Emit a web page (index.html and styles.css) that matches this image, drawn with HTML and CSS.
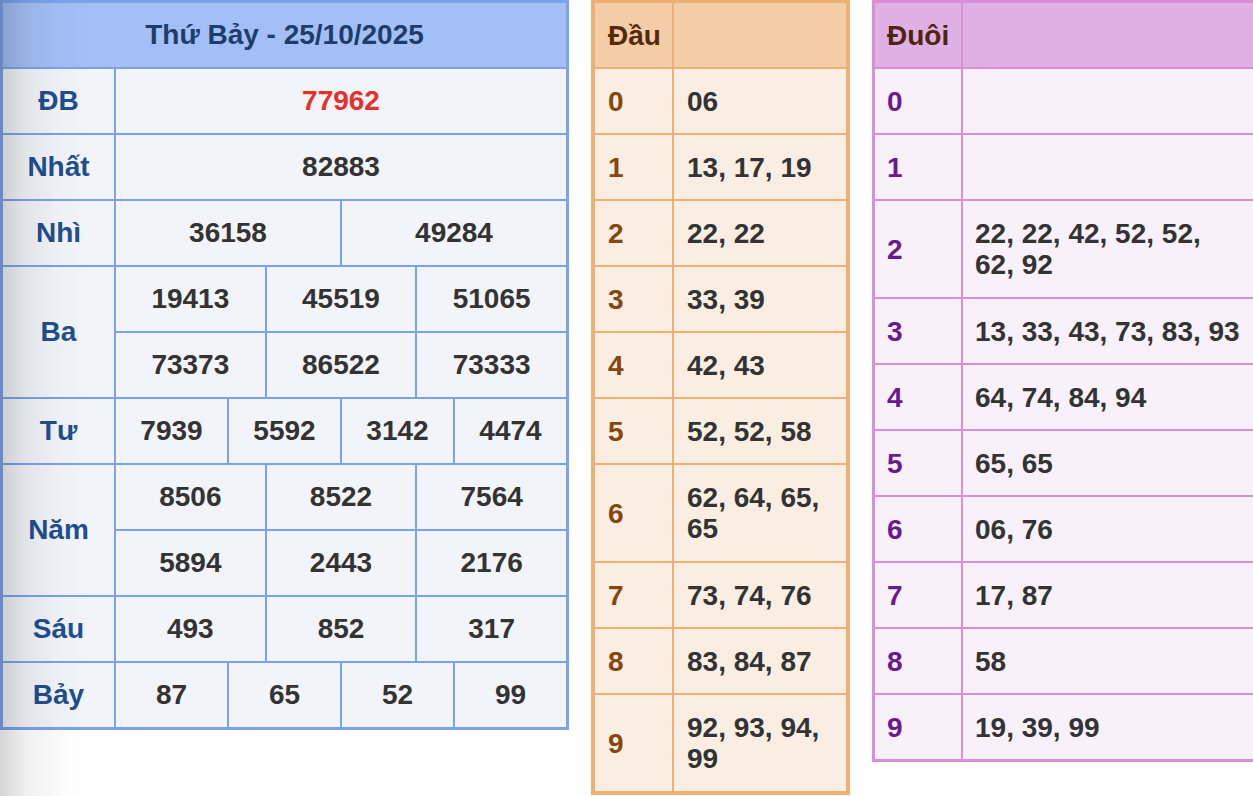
FILE: index.html
```html
<!DOCTYPE html>
<html lang="vi">
<head>
<meta charset="utf-8">
<title>Kết quả xổ số</title>
<link rel="stylesheet" href="styles.css">
</head>
<body>
<div class="page">
  <div class="kq">
    <div class="kq-head c-all">Thứ Bảy - 25/10/2025</div>

    <div class="lbl">ĐB</div>
    <div class="num red c-all">77962</div>

    <div class="lbl">Nhất</div>
    <div class="num c-all">82883</div>

    <div class="lbl">Nhì</div>
    <div class="num c-6">36158</div>
    <div class="num c-6">49284</div>

    <div class="lbl r2">Ba</div>
    <div class="num c-4">19413</div>
    <div class="num c-4">45519</div>
    <div class="num c-4">51065</div>
    <div class="num c-4">73373</div>
    <div class="num c-4">86522</div>
    <div class="num c-4">73333</div>

    <div class="lbl">Tư</div>
    <div class="num c-3">7939</div>
    <div class="num c-3">5592</div>
    <div class="num c-3">3142</div>
    <div class="num c-3">4474</div>

    <div class="lbl r2">Năm</div>
    <div class="num c-4">8506</div>
    <div class="num c-4">8522</div>
    <div class="num c-4">7564</div>
    <div class="num c-4">5894</div>
    <div class="num c-4">2443</div>
    <div class="num c-4">2176</div>

    <div class="lbl">Sáu</div>
    <div class="num c-4">493</div>
    <div class="num c-4">852</div>
    <div class="num c-4">317</div>

    <div class="lbl">Bảy</div>
    <div class="num c-3">87</div>
    <div class="num c-3">65</div>
    <div class="num c-3">52</div>
    <div class="num c-3">99</div>
  </div>

  <div class="lt dau">
    <div class="lt-head">Đầu</div><div class="lt-head"></div>
    <div class="k">0</div><div class="v">06</div>
    <div class="k">1</div><div class="v">13, 17, 19</div>
    <div class="k">2</div><div class="v">22, 22</div>
    <div class="k">3</div><div class="v">33, 39</div>
    <div class="k">4</div><div class="v">42, 43</div>
    <div class="k">5</div><div class="v">52, 52, 58</div>
    <div class="k">6</div><div class="v">62, 64, 65, 65</div>
    <div class="k">7</div><div class="v">73, 74, 76</div>
    <div class="k">8</div><div class="v">83, 84, 87</div>
    <div class="k">9</div><div class="v">92, 93, 94, 99</div>
  </div>

  <div class="lt duoi">
    <div class="lt-head">Đuôi</div><div class="lt-head"></div>
    <div class="k">0</div><div class="v"></div>
    <div class="k">1</div><div class="v"></div>
    <div class="k">2</div><div class="v">22, 22, 42, 52, 52, 62, 92</div>
    <div class="k">3</div><div class="v">13, 33, 43, 73, 83, 93</div>
    <div class="k">4</div><div class="v">64, 74, 84, 94</div>
    <div class="k">5</div><div class="v">65, 65</div>
    <div class="k">6</div><div class="v">06, 76</div>
    <div class="k">7</div><div class="v">17, 87</div>
    <div class="k">8</div><div class="v">58</div>
    <div class="k">9</div><div class="v">19, 39, 99</div>
  </div>
</div>
</body>
</html>
```
FILE: styles.css
```css
html, body {
  margin: 0;
  padding: 0;
  background: #ffffff;
  overflow: hidden;
}

body {
  font-family: "Liberation Sans", Arial, Helvetica, sans-serif;
  font-weight: bold;
  font-size: 28px;
  color: #333333;
}

body::before {
  content: "";
  position: fixed;
  left: 0;
  top: 0;
  width: 90px;
  height: 100%;
  background: linear-gradient(to right, rgba(0, 0, 0, 0.16), rgba(0, 0, 0, 0.06) 30%, rgba(0, 0, 0, 0.015) 65%, rgba(0, 0, 0, 0) 100%);
  pointer-events: none;
  z-index: 5;
}

.page {
  display: flex;
  align-items: flex-start;
  gap: 22px;
  width: 1300px;
}

/* ---------- Result table ---------- */
.kq {
  display: grid;
  grid-template-columns: 111px repeat(12, 1fr);
  grid-auto-rows: 64px;
  gap: 2px;
  width: 563px;
  border: 3px solid #7ba3ec;
  background: #7ba3ec;
  flex: none;
}

.kq > div {
  display: flex;
  align-items: center;
  justify-content: center;
  background: #f3f4f9;
}

.kq .kq-head {
  background: #a3bff5;
  color: #1e3d6d;
}

.c-all { grid-column: 2 / span 12; }
.kq .kq-head.c-all { grid-column: 1 / -1; }
.c-6 { grid-column: span 6; }
.c-4 { grid-column: span 4; }
.c-3 { grid-column: span 3; }

.kq .lbl {
  grid-column: 1;
  color: #1f4f8e;
}

.kq .lbl.r2 { grid-row: span 2; }

.kq .num { color: #333333; }
.kq .num.red { color: #e5302b; }

/* ---------- Loto tables ---------- */
.lt {
  display: grid;
  gap: 2px;
  flex: none;
}

.lt > div {
  display: flex;
  align-items: center;
  padding: 0 13px;
  line-height: 31px;
}

.lt .v { color: #333333; }

.dau {
  grid-template-columns: 77px 172px;
  grid-template-rows: repeat(7, 64px) 96px 64px 64px 96px;
  border: 4px solid #eeb173;
  border-top-width: 3px;
  background: #eeb173;
}

.dau .lt-head { background: #f3cda6; color: #55290b; }
.dau .k { background: #faeee2; color: #87460f; }
.dau .v { background: #faeee2; }

.duoi {
  grid-template-columns: 86px 292px;
  grid-template-rows: repeat(3, 64px) 96px repeat(7, 64px);
  border: 3px solid #d98fd8;
  background: #d98fd8;
}

.duoi > div { padding: 0 12px; }
.duoi .lt-head { background: #dfb0e4; color: #4e2512; }
.duoi .k { background: #f8f1f9; color: #6c1890; }
.duoi .v { background: #f8f1f9; }
```
